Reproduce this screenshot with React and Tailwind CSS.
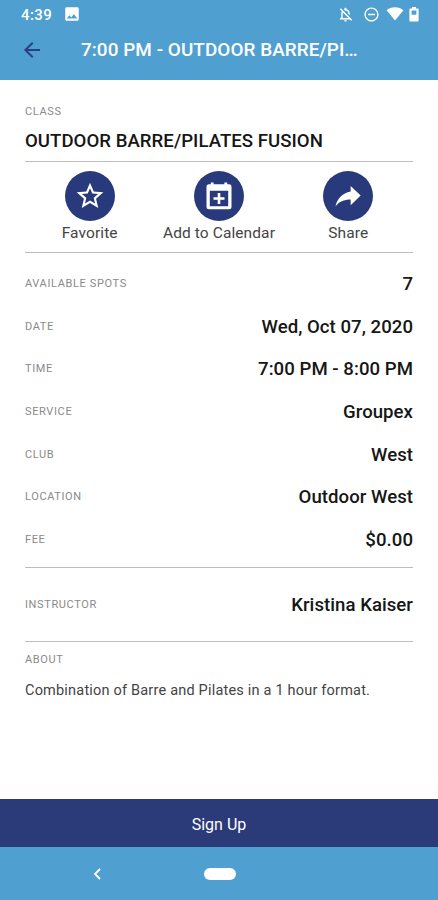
import { MdArrowBack, MdImage, MdOutlineNotificationsOff, MdRemoveCircleOutline, MdStarBorder } from 'react-icons/md'

const details = [
  { label: 'AVAILABLE SPOTS', value: '7' },
  { label: 'DATE', value: 'Wed, Oct 07, 2020' },
  { label: 'TIME', value: '7:00 PM - 8:00 PM' },
  { label: 'SERVICE', value: 'Groupex' },
  { label: 'CLUB', value: 'West' },
  { label: 'LOCATION', value: 'Outdoor West' },
  { label: 'FEE', value: '$0.00' },
]

function WifiIcon() {
  return (
    <svg width="18" height="14" viewBox="0 0 18 14" fill="currentColor">
      <path d="M9 13.6 0.6 3.2C2.6 1.4 5.6 0.3 9 0.3s6.4 1.1 8.4 2.9z" />
    </svg>
  )
}

function BatteryIcon() {
  return (
    <svg width="10" height="15" viewBox="0 0 10 15" fill="currentColor">
      <path fillRule="evenodd" d="M3 0h4v1.6h1.6c.6 0 1 .4 1 1v11c0 .6-.4 1-1 1H1.4c-.6 0-1-.4-1-1v-11c0-.6.4-1 1-1H3zM2.6 3.6v4.2h4.8V3.6z" />
    </svg>
  )
}

function CalendarPlusIcon() {
  return (
    <svg width="26" height="28" viewBox="0 0 26 28" fill="currentColor">
      <path
        fillRule="evenodd"
        d="M4.8.5h2.8v1.8h10.8V.5h2.8v1.8H23a2.5 2.5 0 0 1 2.5 2.5v20a2.5 2.5 0 0 1-2.5 2.5H3a2.5 2.5 0 0 1-2.5-2.5v-20A2.5 2.5 0 0 1 3 2.3h1.8zM3.8 8.7v15.6h18.4V8.7z"
      />
      <path d="M11.7 11h2.6v4.2h4.2v2.6h-4.2V22h-2.6v-4.2H7.5v-2.6h4.2z" />
    </svg>
  )
}

function ShareIcon() {
  return (
    <svg width="32" height="32" viewBox="0 0 24 24" fill="currentColor">
      <path d="M21.5 11.6l-7.5-7.1v4.2C7.5 10 4 14.2 2.6 19.8c2.7-3.5 6.4-5.1 11.4-5.1v4.2z" />
    </svg>
  )
}

function Action({ label, children }) {
  return (
    <div className="flex w-[129.5px] flex-col items-center">
      <div className="flex size-[50px] items-center justify-center rounded-full bg-[#293a7c] text-white">{children}</div>
      <span className="mt-[2px] text-[15.5px] leading-5 tracking-[0.1px] whitespace-nowrap text-[#444]">{label}</span>
    </div>
  )
}

function Label({ children }) {
  return <span className="pt-px text-[11px] leading-4 tracking-[0.63px] text-[#8a8a8a]">{children}</span>
}

function Row({ label, value }) {
  return (
    <div className="flex h-[42.6px] items-center justify-between">
      <Label>{label}</Label>
      <span className="pt-px text-[18.6px] leading-7 font-medium tracking-[0.04px] text-[#161616]">{value}</span>
    </div>
  )
}

export default function App() {
  return (
    <div className="flex h-[900px] w-[438px] flex-col overflow-hidden bg-white font-['Roboto',sans-serif]">
      <header className="h-20 shrink-0 bg-[#4f9fd1] text-white">
        <div className="flex h-7 items-center pr-[19px] pl-[21px]">
          <span className="pt-px text-[15px] leading-5 font-medium tracking-[0.4px]">4:39</span>
          <MdImage className="ml-[11px] size-[18px]" />
          <div className="ml-auto flex items-center">
            <MdOutlineNotificationsOff className="mr-[9px] size-[17px]" />
            <MdRemoveCircleOutline className="mr-[6px] size-[17px]" />
            <WifiIcon />
            <span className="ml-[5px]">
              <BatteryIcon />
            </span>
          </div>
        </div>
        <div className="flex h-11 items-center pl-5">
          <MdArrowBack className="size-6 text-[#2b3f87]" />
          <h1 className="ml-[37px] text-[18.9px] leading-7 font-medium tracking-[0.06px]">7:00 PM - OUTDOOR BARRE/PI…</h1>
        </div>
      </header>

      <main className="flex flex-1 flex-col px-[25px] pt-[23px]">
        <Label>CLASS</Label>
        <h2 className="mt-[9px] h-6 text-[18.6px] leading-6 font-medium tracking-[0.04px] text-[#161616]">OUTDOOR BARRE/PILATES FUSION</h2>
        <div className="mt-2 flex h-[92px] justify-between border-y border-[#bdbdbd] pt-[9px]">
          <Action label="Favorite">
            <MdStarBorder size={32} />
          </Action>
          <Action label="Add to Calendar">
            <CalendarPlusIcon />
          </Action>
          <Action label="Share">
            <ShareIcon />
          </Action>
        </div>
        <div className="h-[315px] border-b border-[#bdbdbd] pt-[9.4px]">
          {details.map((d) => (
            <Row key={d.label} label={d.label} value={d.value} />
          ))}
        </div>
        <div className="flex h-[74px] flex-col justify-center border-b border-[#bdbdbd]">
          <Row label="INSTRUCTOR" value="Kristina Kaiser" />
        </div>
        <div className="mt-[9px] flex flex-col">
          <Label>ABOUT</Label>
          <p className="mt-[13px] text-[14.5px] leading-5 tracking-[0.2px] text-[#444]">Combination of Barre and Pilates in a 1 hour format.</p>
        </div>
      </main>

      <button className="h-12 shrink-0 bg-[#2b3b7a] pt-[3px] text-[16px] text-white">Sign Up</button>
      <nav className="flex h-[53px] shrink-0 items-center bg-[#4f9fd1] pl-[93px] text-white">
        <svg width="8" height="12" viewBox="0 0 8 12" fill="none" stroke="currentColor" strokeWidth="1.8">
          <path d="M7 1 2 6l5 5" />
        </svg>
        <span className="ml-[103px] h-3 w-8 rounded-full bg-white" />
      </nav>
    </div>
  )
}
